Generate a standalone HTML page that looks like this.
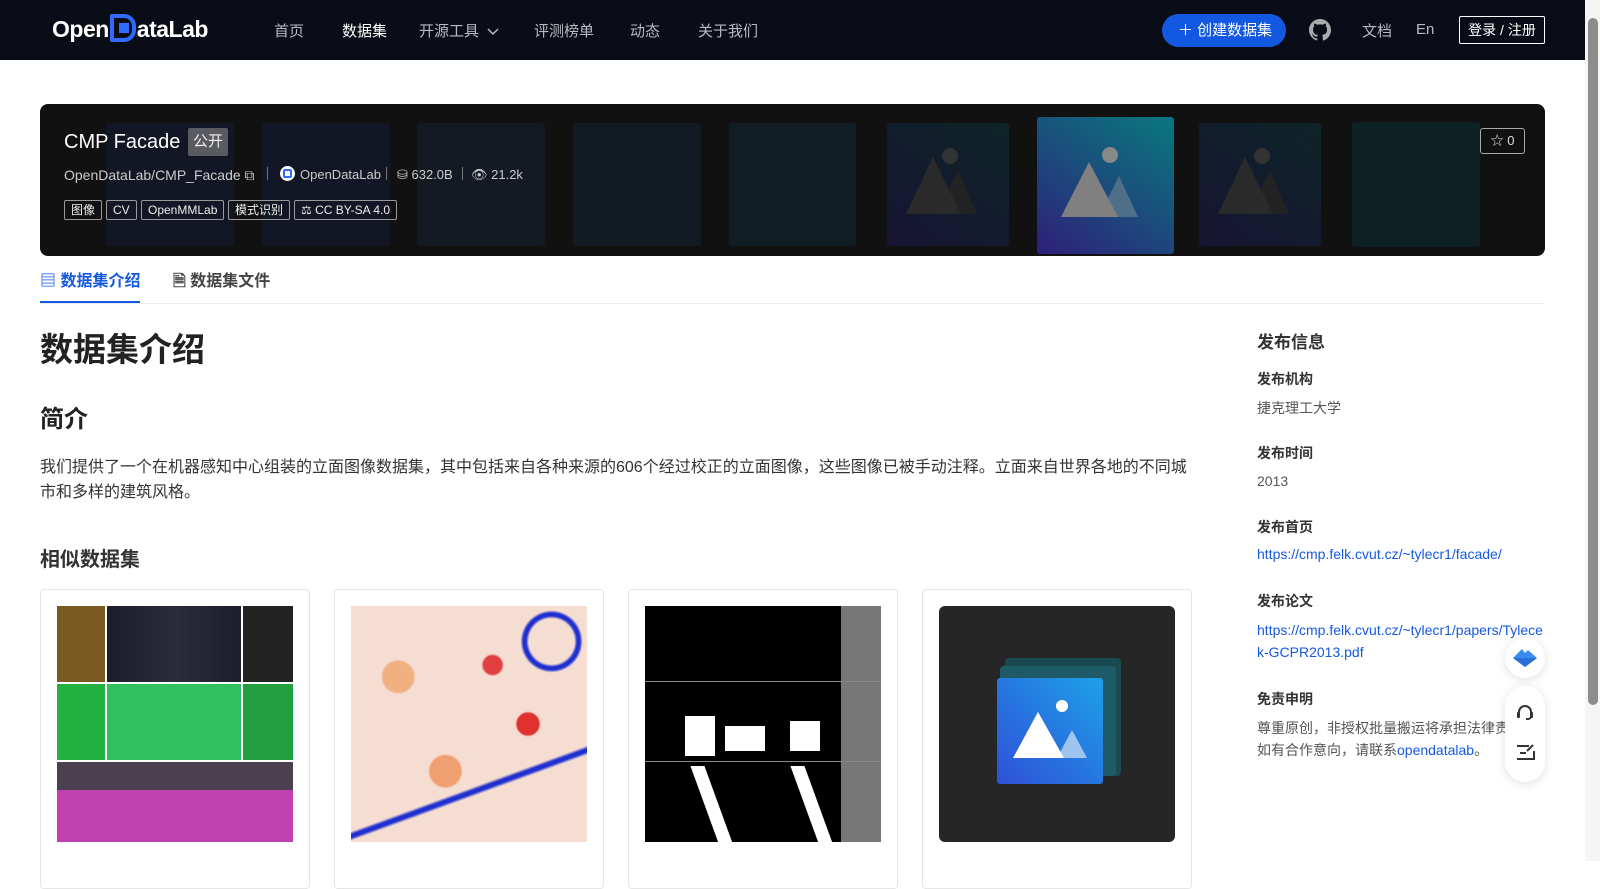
<!DOCTYPE html>
<html><head><meta charset="utf-8">
<style>
*{box-sizing:border-box;margin:0;padding:0}
body{width:1600px;height:861px;overflow:hidden;background:#fff;font-family:"Liberation Sans","Noto Sans CJK SC",sans-serif;color:#222;position:relative}
.nav{position:absolute;left:0;top:0;width:1585px;height:60px;background:#0a0d17}
.nav .it{position:absolute;top:20px;font-size:15px;color:#b8bac0}
.logo{position:absolute;left:52px;top:14px;color:#fff;font-weight:bold;font-size:23px;letter-spacing:-0.5px}
.btn{position:absolute;left:1162px;top:14px;width:124px;height:33px;border-radius:17px;background:#1258e0;color:#fff;font-size:15px;line-height:33px;padding-left:16px}
.login{position:absolute;left:1459px;top:16px;width:86px;height:28px;border:1px solid #fff;border-radius:2px;color:#fff;font-size:14px;line-height:26px;text-align:center}
.banner{position:absolute;left:40px;top:104px;width:1505px;height:152px;background:#111;border-radius:8px;overflow:hidden}
.tile{position:absolute;border-radius:3px}
.title{position:absolute;left:64px;top:131px;color:#fff;font-size:20px}
.pub{position:absolute;left:188px;top:128px;width:40px;height:28px;background:#5a5b60;color:#eee;font-size:15px;line-height:28px;text-align:center;border-radius:2px}
.meta{position:absolute;top:167px;color:#ccc;font-size:13px}
.tag{position:absolute;top:200px;height:20px;border:1px solid #999;border-radius:2px;color:#eee;font-size:12px;line-height:18px;padding:0 6px}
.star{position:absolute;left:1480px;top:128px;width:45px;height:26px;border:1px solid #aaa;border-radius:3px;color:#ddd;font-size:13px;line-height:24px;text-align:center}
.tab{position:absolute;top:267px;font-size:16px;font-weight:bold}
h1{position:absolute;left:40px;top:323px;font-size:33px;font-weight:bold;color:#222}
h2{position:absolute;left:40px;top:399px;font-size:24px;font-weight:bold;color:#222}
.p{position:absolute;left:40px;top:455px;width:1160px;font-size:16px;line-height:25px;color:#333}
h3{position:absolute;left:40px;top:543px;font-size:20px;font-weight:bold;color:#333}
.card{position:absolute;top:589px;width:270px;height:300px;border:1px solid #e5e5e5;border-radius:4px}
.card .im{position:absolute;left:16px;top:16px;width:236px;height:236px;overflow:hidden}
.side{position:absolute;left:1257px;font-size:14px;color:#555}
.side b{color:#333}
a{color:#1559e0;text-decoration:none}
.fb{position:absolute;left:1505px;background:#fff;box-shadow:0 2px 10px rgba(0,0,0,.12)}
</style></head><body>
<div class="nav">
 <div class="logo">Open<span style="display:inline-block;width:26px;height:28px;border:4px solid #2f6bff;border-radius:2px 12px 12px 2px;vertical-align:-5px;margin:0 1px;background:linear-gradient(#2f6bff,#2f6bff) 5px 5px/10px 10px no-repeat"></span>ataLab</div>
 <div class="it" style="left:274px">首页</div>
 <div class="it" style="left:342px;color:#fff">数据集</div>
 <div class="it" style="left:419px">开源工具 <svg width="12" height="8" style="margin-left:4px"><path d="M1 1l5 5 5-5" stroke="#b8bac0" stroke-width="1.5" fill="none"/></svg></div>
 <div class="it" style="left:534px">评测榜单</div>
 <div class="it" style="left:630px">动态</div>
 <div class="it" style="left:698px">关于我们</div>
 <div class="btn">＋ 创建数据集</div>
 <svg style="position:absolute;left:1309px;top:19px" width="22" height="22" viewBox="0 0 16 16"><path fill="#aaa" d="M8 0C3.580 0 0 3.58 0 8c0 3.54 2.29 6.53 5.47 7.59.4.07.55-.17.55-.38v-1.33c-2.23.48-2.7-1.070-2.7-1.07-.36-.92-.89-1.17-.89-1.17-.73-.5.06-.49.06-.49.8.06 1.23.83 1.23.83.71 1.22 1.87.87 2.33.66.07-.52.28-.87.51-1.07-1.78-.2-3.64-.89-3.64-3.95 0-.87.31-1.59.82-2.15-.08-.2-.36-1.02.08-2.12 0 0 .67-.21 2.2.82a7.6 7.6 0 0 1 4 0c1.53-1.04 2.2-.82 2.2-.82.44 1.1.16 1.92.08 2.12.51.56.82 1.27.82 2.15 0 3.07-1.87 3.75-3.65 3.95.29.25.54.73.54 1.48v2.2c0 .21.15.46.55.38A8.01 8.01 0 0 0 16 8c0-4.42-3.58-8-8-8z"/></svg>
 <div class="it" style="left:1362px">文档</div>
 <div class="it" style="left:1416px;top:21px">En</div>
 <div class="login">登录 / 注册</div>
</div>
<div style="position:absolute;left:1585px;top:0;width:15px;height:861px;background:#f5f5f5"></div>
<div style="position:absolute;left:1588px;top:18px;width:10px;height:687px;border-radius:5px;background:#8c8c8c"></div>

<div class="banner">
 <div class="tile" style="left:66px;top:19px;width:128px;height:123px;background:#131624"></div>
 <div class="tile" style="left:222px;top:19px;width:128px;height:123px;background:#131624"></div>
 <div class="tile" style="left:377px;top:19px;width:128px;height:123px;background:#131a24"></div>
 <div class="tile" style="left:533px;top:19px;width:128px;height:123px;background:#121b24"></div>
 <div class="tile" style="left:689px;top:19px;width:127px;height:123px;background:#111d24"></div>
 <div class="tile" style="left:847px;top:19px;width:122px;height:123px;background:linear-gradient(35deg,#171433,#0e2428)"></div>
 <div class="tile" style="left:997px;top:13px;width:137px;height:137px;background:linear-gradient(35deg,#2e1f7a,#1b4d7c 50%,#08787e)"></div>
 <div class="tile" style="left:1159px;top:19px;width:122px;height:123px;background:linear-gradient(35deg,#171433,#0e2428)"></div>
 <div class="tile" style="left:1312px;top:18px;width:128px;height:125px;background:#0d2022"></div>
 <svg style="position:absolute;left:860px;top:40px" width="90" height="70"><circle cx="50" cy="12" r="8" fill="#333"/><path d="M37 70L58 26 77 70z" fill="#222"/><path d="M6 70L33 13 61 70z" fill="#2a2a2a"/></svg>
 <svg style="position:absolute;left:1013px;top:37px" width="100" height="80"><circle cx="57" cy="14" r="8" fill="#888"/><path d="M46 76L66 35 85 76z" fill="#4f6f88"/><path d="M8 76L36 21 65 76z" fill="#808080"/></svg>
 <svg style="position:absolute;left:1172px;top:40px" width="90" height="70"><circle cx="50" cy="12" r="8" fill="#333"/><path d="M37 70L58 26 77 70z" fill="#222"/><path d="M6 70L33 13 61 70z" fill="#2a2a2a"/></svg>
</div>
<div class="title">CMP Facade</div>
<div class="pub">公开</div>
<div class="meta" style="left:64px;font-size:14px">OpenDataLab/CMP_Facade ⧉</div>
<div style="position:absolute;left:267px;top:167px;width:1px;height:13px;background:#777"></div>
<div style="position:absolute;left:280px;top:166px;width:15px;height:15px;border-radius:50%;background:#fff"><div style="margin:3px;width:9px;height:9px;border:2px solid #2f6bff;border-radius:2px"></div></div>
<div class="meta" style="left:300px">OpenDataLab</div>
<div style="position:absolute;left:386px;top:167px;width:1px;height:13px;background:#777"></div>
<div class="meta" style="left:397px">⛁ 632.0B</div>
<div style="position:absolute;left:462px;top:167px;width:1px;height:13px;background:#777"></div>
<div class="meta" style="left:471px">👁 21.2k</div>
<div class="tag" style="left:64px">图像</div>
<div class="tag" style="left:106px">CV</div>
<div class="tag" style="left:141px">OpenMMLab</div>
<div class="tag" style="left:228px">模式识别</div>
<div class="tag" style="left:294px">⚖ CC BY-SA 4.0</div>
<div class="star">☆ 0</div>

<div class="tab" style="left:40px;color:#1559e0">▤ 数据集介绍</div>
<div style="position:absolute;left:40px;top:301px;width:100px;height:2px;background:#1559e0"></div>
<div class="tab" style="left:173px;color:#444">🗎 数据集文件</div>
<div style="position:absolute;left:40px;top:303px;width:1505px;height:1px;background:#eee"></div>

<h1>数据集介绍</h1>
<h2>简介</h2>
<div class="p">我们提供了一个在机器感知中心组装的立面图像数据集，其中包括来自各种来源的606个经过校正的立面图像，这些图像已被手动注释。立面来自世界各地的不同城市和多样的建筑风格。</div>
<h3>相似数据集</h3>
<div class="card" style="left:40px"><div class="im" style="background:#333"><div style="position:absolute;top:0;left:0;width:236px;height:76px;background:linear-gradient(90deg,#7a5a20 48px,#fff 48px 50px,#1b1e2a 50px,#2a2c3a 50%,#1b1e2a 184px,#fff 184px 186px,#222 186px)"></div><div style="position:absolute;top:78px;left:0;width:236px;height:76px;background:linear-gradient(90deg,#22b040 48px,#fff 48px 50px,#30c060 50px 184px,#fff 184px 186px,#22a040 186px)"></div><div style="position:absolute;top:156px;left:0;width:236px;height:80px;background:linear-gradient(#4a4050 35%,#c040b0 35%)"></div><div style="position:absolute;top:76px;left:0;width:236px;height:2px;background:#fff"></div><div style="position:absolute;top:154px;left:0;width:236px;height:2px;background:#fff"></div></div></div>
<div class="card" style="left:334px"><div class="im" style="background:radial-gradient(circle at 20% 30%,#f0b080 0 6%,transparent 7%),radial-gradient(circle at 75% 50%,#e03030 0 5%,transparent 6%),radial-gradient(circle at 40% 70%,#f0a070 0 7%,transparent 8%),radial-gradient(circle at 60% 25%,#e04040 0 4%,transparent 5%),radial-gradient(circle at 85% 15%,transparent 0 8%,#2030d0 9% 10%,transparent 11%),linear-gradient(160deg,transparent 70%,#2030d0 71% 72%,transparent 73%),#f6ddd2"></div></div>
<div class="card" style="left:628px"><div class="im" style="background:#000"><div style="position:absolute;right:0;top:0;width:40px;height:236px;background:#777"></div><div style="position:absolute;left:0;top:75px;width:236px;height:1px;background:#888"></div><div style="position:absolute;left:0;top:155px;width:236px;height:1px;background:#888"></div><div style="position:absolute;left:40px;top:110px;width:30px;height:40px;background:#fff"></div><div style="position:absolute;left:80px;top:120px;width:40px;height:25px;background:#fff"></div><div style="position:absolute;left:145px;top:115px;width:30px;height:30px;background:#fff"></div><div style="position:absolute;left:60px;top:160px;width:14px;height:80px;background:#fff;transform:skewX(20deg)"></div><div style="position:absolute;left:160px;top:160px;width:14px;height:80px;background:#fff;transform:skewX(20deg)"></div></div></div>
<div class="card" style="left:922px"><div class="im" style="background:#262626;border-radius:6px"><div style="position:absolute;left:66px;top:52px;width:116px;height:118px;background:#1c4a52;border-radius:4px"></div><div style="position:absolute;left:61px;top:60px;width:116px;height:110px;background:#1e5a68;border-radius:4px"></div><div style="position:absolute;left:58px;top:72px;width:106px;height:106px;background:linear-gradient(45deg,#2e50d8,#1ea0e8);border-radius:3px"></div><svg style="position:absolute;left:58px;top:72px" width="106" height="106"><circle cx="65" cy="28" r="6" fill="#fff"/><path d="M60 80L75 52 90 80z" fill="#9fc4f0"/><path d="M16 80L41 34 67 80z" fill="#fff"/></svg></div></div>

<div class="side" style="top:328px;font-size:17px"><b>发布信息</b></div>
<div class="side" style="top:369px"><b>发布机构</b></div>
<div class="side" style="top:398px">捷克理工大学</div>
<div class="side" style="top:443px"><b>发布时间</b></div>
<div class="side" style="top:473px">2013</div>
<div class="side" style="top:517px"><b>发布首页</b></div>
<div class="side" style="top:546px"><a>https://cmp.felk.cvut.cz/~tylecr1/facade/</a></div>
<div class="side" style="top:591px"><b>发布论文</b></div>
<div class="side" style="top:619px;width:290px;line-height:22px;word-break:break-all"><a>https://cmp.felk.cvut.cz/~tylecr1/papers/Tylecek-GCPR2013.pdf</a></div>
<div class="side" style="top:689px"><b>免责申明</b></div>
<div class="side" style="top:717px;width:260px;line-height:22px;white-space:nowrap">尊重原创，非授权批量搬运将承担法律责<br>如有合作意向，请联系<a>opendatalab</a>。</div>

<div class="fb" style="top:638px;width:40px;height:40px;border-radius:50%"><svg style="position:absolute;left:8px;top:10px" width="24" height="20"><path d="M0 10L9 1 12 5 15 2 24 10 12 19z" fill="#3b8cf0"/><path d="M0 10L24 10 12 19z" fill="#2a6fd8"/></svg></div>
<div class="fb" style="top:686px;width:40px;height:96px;border-radius:20px"><svg style="position:absolute;left:10px;top:17px" width="20" height="20"><path d="M4 12V9a6 6 0 0 1 12 0v4a3 3 0 0 1-3 3h-2" stroke="#333" stroke-width="2" fill="none"/><rect x="2" y="9" width="3" height="6" rx="1" fill="#333"/><rect x="15" y="9" width="3" height="6" rx="1" fill="#333"/></svg><svg style="position:absolute;left:11px;top:58px" width="19" height="17"><path d="M1 2h12M1 15h17V7M4 9h6" stroke="#333" stroke-width="2" fill="none"/><path d="M17 1l-6 6" stroke="#333" stroke-width="2"/></svg></div>
</body></html>
